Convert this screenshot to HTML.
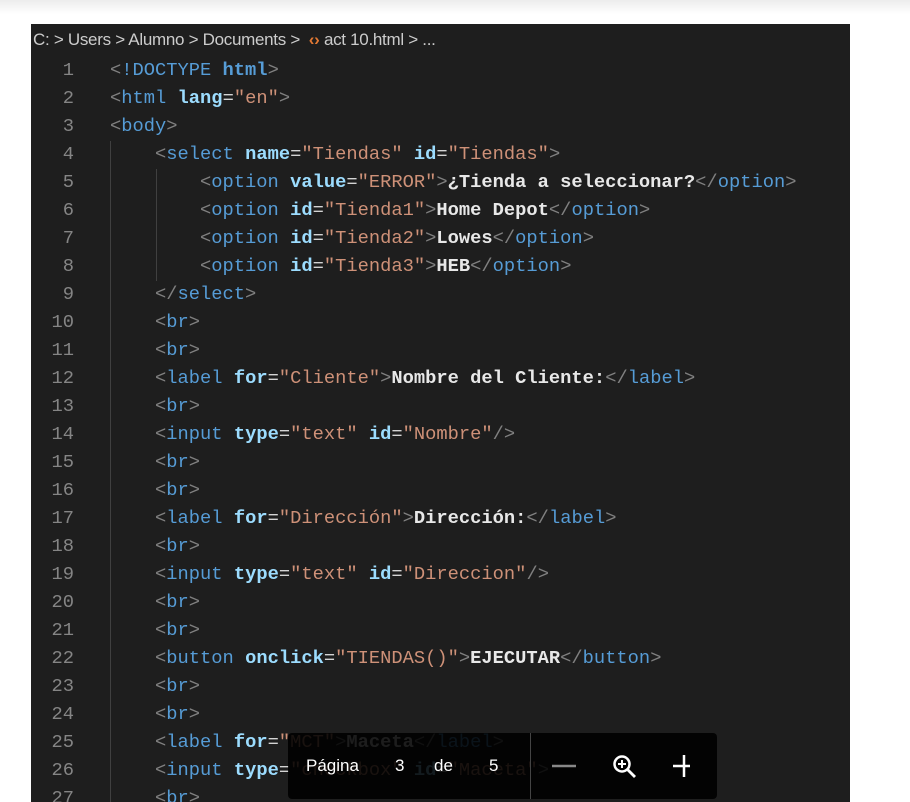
<!DOCTYPE html>
<html><head><style>
body{margin:0;width:910px;height:802px;overflow:hidden;background:#fff;position:relative;font-family:"Liberation Sans",sans-serif}
.top{position:absolute;left:0;top:0;width:910px;height:14px;background:linear-gradient(#ececec,#fff)}
.panel{position:absolute;left:31px;top:24px;width:819px;height:778px;background:#1e1e1e;overflow:hidden}
.crumb{position:absolute;left:2px;top:6px;color:#cccccc;font-size:17px;letter-spacing:-0.3px;white-space:nowrap}
.crumb .ic{color:#e37933;font-weight:bold}
.line{position:absolute;left:0;height:28px;line-height:28px;font-family:"Liberation Mono",monospace;font-size:18.75px;white-space:pre;width:819px}
.ln{position:absolute;left:0;width:43px;text-align:right;color:#858585}
.cd{position:absolute;left:79px;color:#d4d4d4}
.g{color:#808080}.t{color:#569cd6}.a{color:#9cdcfe;font-weight:bold}.s{color:#ce9178}.x{color:#e8e8e8;font-weight:bold}
.guide{position:absolute;width:1px;background:#404040}
.bar{position:absolute;left:288px;top:733px;width:429px;height:66px;background:rgba(0,0,0,0.88);border-radius:4px;color:#fff;font-size:17px}
.bar span{position:absolute;top:23px}
.div{position:absolute;left:242px;top:0;width:1px;height:66px;background:#444}
</style></head><body>
<div class="top"></div>
<div class="panel">
<div class="crumb">C: &gt; Users &gt; Alumno &gt; Documents &gt; &nbsp;<span class="ic">&lsaquo;&rsaquo;</span> act 10.html &gt; ...</div>
<div class="guide" style="left:79px;top:117px;height:661px"></div>
<div class="guide" style="left:125px;top:145px;height:112px"></div>
<div id="code"></div>
</div>
<div class="bar">
<span style="left:18px">Página</span><span style="left:107px">3</span><span style="left:146px">de</span><span style="left:201px">5</span>
<div class="div"></div>
<svg style="position:absolute;left:262px;top:22px" width="140" height="24" viewBox="0 0 140 24">
<line x1="2" y1="11" x2="26" y2="11" stroke="#888" stroke-width="2.5"/>
<circle cx="72" cy="9" r="7.5" fill="none" stroke="#fff" stroke-width="2.5"/>
<line x1="77.5" y1="14.5" x2="85" y2="22" stroke="#fff" stroke-width="2.8"/>
<line x1="68" y1="9" x2="76" y2="9" stroke="#fff" stroke-width="2"/>
<line x1="72" y1="5" x2="72" y2="13" stroke="#fff" stroke-width="2"/>
<line x1="123" y1="11" x2="145" y2="11" stroke="#fff" stroke-width="2.5"/>
<line x1="134" y1="0" x2="134" y2="22" stroke="#fff" stroke-width="2.5"/>
</svg>
</div>
<script>
function T(n){return '<span class="g">&lt;</span><span class="t">'+n+'</span>'}
function C(n){return '<span class="g">&lt;/</span><span class="t">'+n+'</span><span class="g">&gt;</span>'}
var E='<span class="g">&gt;</span>';
function A(k,v){return ' <span class="a">'+k+'</span>=<span class="s">"'+v+'"</span>'}
function X(s){return '<span class="x">'+s+'</span>'}
var i1='    ',i2='        ';
var L=[
T('!DOCTYPE')+' <span class="t" style="font-weight:bold">html</span>'+E,
T('html')+A('lang','en')+E,
T('body')+E,
i1+T('select')+A('name','Tiendas')+A('id','Tiendas')+E,
i2+T('option')+A('value','ERROR')+E+X('¿Tienda a seleccionar?')+C('option'),
i2+T('option')+A('id','Tienda1')+E+X('Home Depot')+C('option'),
i2+T('option')+A('id','Tienda2')+E+X('Lowes')+C('option'),
i2+T('option')+A('id','Tienda3')+E+X('HEB')+C('option'),
i1+C('select'),
i1+T('br')+E,i1+T('br')+E,
i1+T('label')+A('for','Cliente')+E+X('Nombre del Cliente:')+C('label'),
i1+T('br')+E,
i1+T('input')+A('type','text')+A('id','Nombre')+'<span class="g">/&gt;</span>',
i1+T('br')+E,i1+T('br')+E,
i1+T('label')+A('for','Dirección')+E+X('Dirección:')+C('label'),
i1+T('br')+E,
i1+T('input')+A('type','text')+A('id','Direccion')+'<span class="g">/&gt;</span>',
i1+T('br')+E,i1+T('br')+E,
i1+T('button')+A('onclick','TIENDAS()')+E+X('EJECUTAR')+C('button'),
i1+T('br')+E,i1+T('br')+E,
i1+T('label')+A('for','MCT')+E+X('Maceta')+C('label'),
i1+T('input')+A('type','checkbox')+A('id','Maceta')+E,
i1+T('br')+E];
var h='';
for(var k=0;k<L.length;k++){h+='<div class="line" style="top:'+(32+k*28)+'px"><span class="ln">'+(k+1)+'</span><span class="cd">'+L[k]+'</span></div>'}
document.getElementById('code').innerHTML=h;
</script>
</body></html>
